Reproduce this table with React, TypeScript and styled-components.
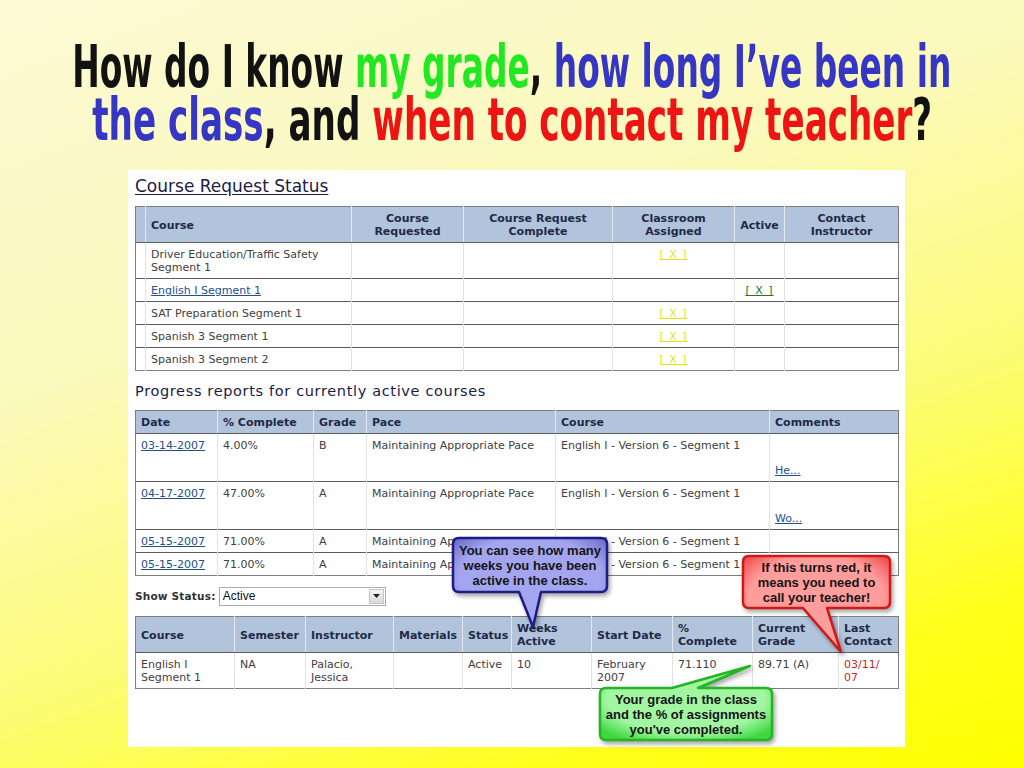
import React from "react";
import styled, { createGlobalStyle } from "styled-components";

const GlobalStyle = createGlobalStyle`
  html, body { margin: 0; padding: 0; }
  body {
    width: 1024px;
    height: 768px;
    overflow: hidden;
    font-family: "DejaVu Sans", Verdana, sans-serif;
  }
`;

const Slide = styled.div`
  position: relative;
  width: 1024px;
  height: 768px;
  overflow: hidden;
  display: flex;
  flex-direction: column;
  background: linear-gradient(160deg, #fbfad4 0%, #fbf9bc 35%, #fcfc78 62%, #ffff1c 85%, #ffff00 100%);
`;

const Title = styled.h1`
  margin: 0;
  padding-top: 41px;
  display: flex;
  flex-direction: column;
  align-items: center;
  font-family: "DejaVu Sans Condensed", "DejaVu Sans", sans-serif;
  font-weight: 700;
  font-size: 58px;
  line-height: 53px;
`;

const TitleLine = styled.div<{ $sx: number }>`
  white-space: nowrap;
  transform: scaleX(${(p) => p.$sx});
  color: #121212;
`;

const Tone = styled.span<{ $c: string }>`
  color: ${(p) => p.$c};
`;

const Panel = styled.section`
  margin: 23px 0 0 128px;
  width: 777px;
  height: 577px;
  box-sizing: border-box;
  background: #ffffff;
  padding: 6px 7px 0;
  display: flex;
  flex-direction: column;
`;

const SectionTitle = styled.h2<{ $size: number; $underline?: boolean; $mt: number; $mb: number }>`
  margin: ${(p) => p.$mt}px 0 ${(p) => p.$mb}px;
  font-family: "DejaVu Sans", Verdana, sans-serif;
  font-weight: 400;
  font-size: ${(p) => p.$size}px;
  line-height: 20px;
  height: 20px;
  color: #1b1b45;
  letter-spacing: ${(p) => (p.$underline ? 0 : 0.65)}px;
  text-decoration: ${(p) => (p.$underline ? "underline" : "none")};
  text-underline-offset: 2px;
  white-space: nowrap;
`;

const Grid = styled.table`
  width: 763px;
  border-collapse: collapse;
  table-layout: fixed;
  border: 1px solid #7d7d7d;
  font-family: "DejaVu Sans", Verdana, sans-serif;
  font-size: 11px;
  line-height: 13px;
  color: #404040;
`;

const Th = styled.th<{ $align?: string }>`
  background: #b2c4dc;
  color: #1e2a46;
  font-weight: 700;
  text-align: ${(p) => p.$align || "left"};
  padding: 5px 5px 4px 5px;
  vertical-align: middle;
  border-left: 1px solid #e4e9f0;
  border-bottom: 1px solid #5d5d5d;
  &:first-child {
    border-left-color: #7d7d7d;
  }
`;

const Td = styled.td<{ $align?: string }>`
  padding: 5px 5px 4px 5px;
  vertical-align: top;
  text-align: ${(p) => p.$align || "left"};
  border-left: 1px solid #e2e2e2;
  border-top: 1px solid #5d5d5d;
  &:first-child {
    border-left-color: #7d7d7d;
  }
`;

const TextLink = styled.span<{ $c?: string }>`
  color: ${(p) => p.$c || "#21508c"};
  text-decoration: underline;
`;

const Mark = styled.span<{ $tone: "yellow" | "green" }>`
  color: ${(p) => (p.$tone === "yellow" ? "#e2e21c" : "#2c6e2c")};
  text-decoration: underline;
  letter-spacing: 1px;
`;

const CommentLink = styled(TextLink)`
  display: inline-block;
  margin-top: 25px;
`;

const RedText = styled.span`
  color: #c42626;
`;

const StatusRow = styled.div`
  display: flex;
  align-items: center;
  gap: 3px;
  height: 18px;
  margin: 11px 0 11px;
`;

const StatusLabel = styled.span`
  font-weight: 700;
  font-size: 10.5px;
  color: #333;
  letter-spacing: 0.2px;
`;

const SelectBox = styled.div`
  width: 167px;
  height: 19px;
  box-sizing: border-box;
  border: 1px solid #a7aeb5;
  display: flex;
  align-items: center;
  justify-content: space-between;
  padding-left: 3px;
  font-family: "Liberation Sans", Arial, sans-serif;
  font-size: 12px;
  color: #111;
`;

const SelectButton = styled.span`
  width: 15px;
  height: 15px;
  margin-right: 1px;
  box-sizing: border-box;
  border: 1px solid #c4c4c4;
  background: linear-gradient(#f6f6f6, #d9d9d9);
  display: flex;
  align-items: center;
  justify-content: center;
`;

const Callout = styled.div<{ $x: number; $y: number; $w: number; $h: number }>`
  position: absolute;
  left: ${(p) => p.$x}px;
  top: ${(p) => p.$y}px;
  width: ${(p) => p.$w}px;
  height: ${(p) => p.$h}px;
`;

const CalloutShape = styled.svg`
  position: absolute;
  left: 0;
  top: 0;
  overflow: visible;
  filter: drop-shadow(2px 3px 2px rgba(0, 0, 0, 0.35));
`;

const CalloutText = styled.div`
  position: relative;
  height: 100%;
  display: flex;
  align-items: center;
  justify-content: center;
  text-align: center;
  font-family: "Liberation Sans", Arial, sans-serif;
  font-weight: 700;
  font-size: 13px;
  line-height: 15px;
  color: #141414;
`;

type Tail = { a: number; b: number; tx: number; ty: number; side: "top" | "bottom" };

function bubblePath(w: number, h: number, t: Tail) {
  const r = 6;
  if (t.side === "bottom") {
    return `M${r},0 H${w - r} Q${w},0 ${w},${r} V${h - r} Q${w},${h} ${w - r},${h} H${t.b} L${t.tx},${t.ty} L${t.a},${h} H${r} Q0,${h} 0,${h - r} V${r} Q0,0 ${r},0 Z`;
  }
  return `M${r},0 H${t.a} L${t.tx},${t.ty} L${t.b},0 H${w - r} Q${w},0 ${w},${r} V${h - r} Q${w},${h} ${w - r},${h} H${r} Q0,${h} 0,${h - r} V${r} Q0,0 ${r},0 Z`;
}

function Bubble(props: {
  id: string;
  x: number;
  y: number;
  w: number;
  h: number;
  tail: Tail;
  inner: string;
  outer: string;
  stroke: string;
  lines: string[];
}) {
  const { id, x, y, w, h, tail, inner, outer, stroke, lines } = props;
  return (
    <Callout $x={x} $y={y} $w={w} $h={h}>
      <CalloutShape width={w} height={h}>
        <defs>
          <radialGradient id={id} cx="50%" cy="45%" r="65%">
            <stop offset="0%" stopColor={inner} />
            <stop offset="70%" stopColor={inner} />
            <stop offset="100%" stopColor={outer} />
          </radialGradient>
        </defs>
        <path d={bubblePath(w, h, tail)} fill={`url(#${id})`} stroke={stroke} strokeWidth={2.5} strokeLinejoin="round" />
      </CalloutShape>
      <CalloutText>
        <div>
          {lines.map((l, i) => (
            <div key={i}>{l}</div>
          ))}
        </div>
      </CalloutText>
    </Callout>
  );
}

const requests = [
  { course: "Driver Education/Traffic Safety Segment 1", link: false, classroom: true, active: false },
  { course: "English I Segment 1", link: true, classroom: false, active: true },
  { course: "SAT Preparation Segment 1", link: false, classroom: true, active: false },
  { course: "Spanish 3 Segment 1", link: false, classroom: true, active: false },
  { course: "Spanish 3 Segment 2", link: false, classroom: true, active: false },
];

const reports = [
  { date: "03-14-2007", pct: "4.00%", grade: "B", comment: "He..." },
  { date: "04-17-2007", pct: "47.00%", grade: "A", comment: "Wo..." },
  { date: "05-15-2007", pct: "71.00%", grade: "A", comment: "" },
  { date: "05-15-2007", pct: "71.00%", grade: "A", comment: "" },
];

export default function App() {
  return (
    <>
      <GlobalStyle />
      <Slide>
        <Title>
          <TitleLine $sx={0.63}>
            How do I know <Tone $c="#22e822">my grade</Tone>, <Tone $c="#3636c4">how long I’ve been in</Tone>
          </TitleLine>
          <TitleLine $sx={0.655}>
            <Tone $c="#3636c4">the class</Tone>, and <Tone $c="#ee1414">when to contact my teacher</Tone>?
          </TitleLine>
        </Title>

        <Panel>
          <SectionTitle $size={17} $underline $mt={0} $mb={10}>
            Course Request Status
          </SectionTitle>
          <Grid>
            <colgroup>
              <col style={{ width: 10 }} />
              <col style={{ width: 206 }} />
              <col style={{ width: 112 }} />
              <col style={{ width: 149 }} />
              <col style={{ width: 122 }} />
              <col style={{ width: 50 }} />
              <col style={{ width: 114 }} />
            </colgroup>
            <thead>
              <tr>
                <Th />
                <Th>Course</Th>
                <Th $align="center">Course Requested</Th>
                <Th $align="center">Course Request Complete</Th>
                <Th $align="center">Classroom Assigned</Th>
                <Th $align="center">Active</Th>
                <Th $align="center">Contact Instructor</Th>
              </tr>
            </thead>
            <tbody>
              {requests.map((r) => (
                <tr key={r.course}>
                  <Td />
                  <Td>{r.link ? <TextLink>{r.course}</TextLink> : r.course}</Td>
                  <Td />
                  <Td />
                  <Td $align="center">{r.classroom && <Mark $tone="yellow">[ X ]</Mark>}</Td>
                  <Td $align="center">{r.active && <Mark $tone="green">[ X ]</Mark>}</Td>
                  <Td />
                </tr>
              ))}
            </tbody>
          </Grid>

          <SectionTitle $size={14.5} $mt={10} $mb={9}>
            Progress reports for currently active courses
          </SectionTitle>
          <Grid>
            <colgroup>
              <col style={{ width: 82 }} />
              <col style={{ width: 96 }} />
              <col style={{ width: 53 }} />
              <col style={{ width: 189 }} />
              <col style={{ width: 214 }} />
              <col style={{ width: 129 }} />
            </colgroup>
            <thead>
              <tr>
                <Th>Date</Th>
                <Th>% Complete</Th>
                <Th>Grade</Th>
                <Th>Pace</Th>
                <Th>Course</Th>
                <Th>Comments</Th>
              </tr>
            </thead>
            <tbody>
              {reports.map((r, i) => (
                <tr key={i}>
                  <Td>
                    <TextLink>{r.date}</TextLink>
                  </Td>
                  <Td>{r.pct}</Td>
                  <Td>{r.grade}</Td>
                  <Td>Maintaining Appropriate Pace</Td>
                  <Td>English I - Version 6 - Segment 1</Td>
                  <Td>{r.comment && <CommentLink>{r.comment}</CommentLink>}</Td>
                </tr>
              ))}
            </tbody>
          </Grid>

          <StatusRow>
            <StatusLabel>Show Status:</StatusLabel>
            <SelectBox>
              Active
              <SelectButton>
                <svg width="7" height="4" viewBox="0 0 7 4">
                  <path d="M0 0 H7 L3.5 4 Z" fill="#222" />
                </svg>
              </SelectButton>
            </SelectBox>
          </StatusRow>

          <Grid>
            <colgroup>
              <col style={{ width: 99 }} />
              <col style={{ width: 71 }} />
              <col style={{ width: 88 }} />
              <col style={{ width: 69 }} />
              <col style={{ width: 49 }} />
              <col style={{ width: 80 }} />
              <col style={{ width: 81 }} />
              <col style={{ width: 80 }} />
              <col style={{ width: 86 }} />
              <col style={{ width: 60 }} />
            </colgroup>
            <thead>
              <tr>
                <Th>Course</Th>
                <Th>Semester</Th>
                <Th>Instructor</Th>
                <Th>Materials</Th>
                <Th>Status</Th>
                <Th>Weeks Active</Th>
                <Th>Start Date</Th>
                <Th>% Complete</Th>
                <Th>Current Grade</Th>
                <Th>Last Contact</Th>
              </tr>
            </thead>
            <tbody>
              <tr>
                <Td>English I Segment 1</Td>
                <Td>NA</Td>
                <Td>Palacio, Jessica</Td>
                <Td />
                <Td>Active</Td>
                <Td>10</Td>
                <Td>February 2007</Td>
                <Td>71.110</Td>
                <Td>89.71 (A)</Td>
                <Td>
                  <RedText>
                    03/11/
                    <br />
                    07
                  </RedText>
                </Td>
              </tr>
            </tbody>
          </Grid>
        </Panel>

        <Bubble
          id="gBlue"
          x={453}
          y={538}
          w={154}
          h={54}
          tail={{ side: "bottom", a: 66, b: 88, tx: 80, ty: 89 }}
          inner="#a3a6ee"
          outer="#6a6dc8"
          stroke="#1c1c86"
          lines={["You can see how many", "weeks you have been", "active in the class."]}
        />
        <Bubble
          id="gRed"
          x={743}
          y={556}
          w={147}
          h={52}
          tail={{ side: "bottom", a: 60, b: 84, tx: 98, ty: 96 }}
          inner="#ff9d9d"
          outer="#ee4a4a"
          stroke="#d01818"
          lines={["If this turns red, it", "means you need to", "call your teacher!"]}
        />
        <Bubble
          id="gGreen"
          x={600}
          y={688}
          w={172}
          h={52}
          tail={{ side: "top", a: 72, b: 98, tx: 150, ty: -22 }}
          inner="#a2f6a2"
          outer="#3ed83e"
          stroke="#24b424"
          lines={["Your grade in the class", "and the % of assignments", "you've completed."]}
        />
      </Slide>
    </>
  );
}
